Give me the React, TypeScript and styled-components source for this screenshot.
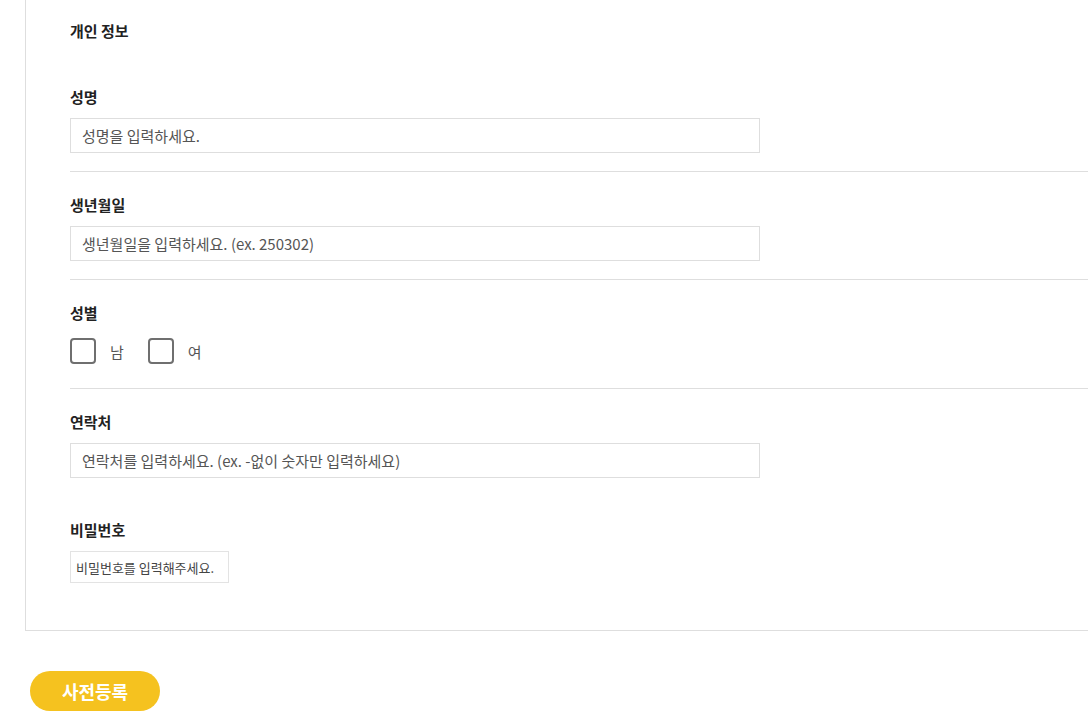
import React from 'react';
import styled, {createGlobalStyle} from "styled-components";

const GlobalStyle = createGlobalStyle`
    html, body {
        margin: 0;
        padding: 0;
        background: #fff;
        overflow: hidden;
    }
    body {
        font-family: "Noto Sans CJK KR", "Noto Sans", sans-serif;
        color: #222;
    }
`

type FieldType = {
    label: string
    placeholder: string
}

const topFields: FieldType[] = [
    {label: '성명', placeholder: '성명을 입력하세요.'},
    {label: '생년월일', placeholder: '생년월일을 입력하세요. (ex. 250302)'},
]

export default function App() {
    return (
        <>
            <GlobalStyle/>
            <Page>
                <Panel>
                    <Title>개인 정보</Title>

                    {topFields.map(f => (
                        <Section key={f.label}>
                            <Label>{f.label}</Label>
                            <TextInput placeholder={f.placeholder}/>
                        </Section>
                    ))}

                    <Section>
                        <Label>성별</Label>
                        <CheckRow>
                            <CheckItem>
                                <Box/>
                                <CheckText>남</CheckText>
                            </CheckItem>
                            <CheckItem>
                                <Box/>
                                <CheckText>여</CheckText>
                            </CheckItem>
                        </CheckRow>
                    </Section>

                    {/* 연락처 아래 구분선은 안 보임 */}
                    <Section hideLine>
                        <Label>연락처</Label>
                        <TextInput placeholder="연락처를 입력하세요. (ex. -없이 숫자만 입력하세요)"/>
                    </Section>

                    <LastSection>
                        <Label>비밀번호</Label>
                        <SmallInput type="password" placeholder="비밀번호를 입력해주세요."/>
                    </LastSection>
                </Panel>

                <SubmitButton>사전등록</SubmitButton>
            </Page>
        </>
    );
}

const Page = styled.div`
    width: 1088px;
    height: 727px;
    overflow: hidden;
`

const Panel = styled.div`
    margin-left: 25px;
    width: 1100px;
    border-left: 1px solid #dedede;
    border-bottom: 1px solid #dedede;
    padding: 20px 0 47px 44px;
    box-sizing: border-box;
`

const Title = styled.h2`
    margin: 0 0 44px;
    font-size: 15px;
    line-height: 22px;
    font-weight: 700;
    color: #222;
`

const Section = styled.div<{ hideLine?: boolean }>`
    padding-bottom: 18px;
    margin-bottom: 22px;
    border-bottom: 1px solid ${(props) => props.hideLine ? 'transparent' : '#dedede'};
`

const LastSection = styled.div``

const Label = styled.div`
    font-size: 15px;
    line-height: 22px;
    font-weight: 700;
    color: #222;
    margin-bottom: 10px;
`

const TextInput = styled.input`
    display: block;
    width: 690px;
    height: 35px;
    box-sizing: border-box;
    border: 1px solid #dedede;
    padding: 0 11px;
    font-family: "Noto Sans CJK KR", "Noto Sans", sans-serif;
    font-size: 15px;
    color: #333;
    outline: none;

    &::placeholder {
        color: #555;
    }
`

const SmallInput = styled.input`
    display: block;
    width: 159px;
    height: 32px;
    box-sizing: border-box;
    border: 1px solid #e3e3e3;
    padding: 0 5px;
    font-family: "Noto Sans CJK KR", "Noto Sans", sans-serif;
    font-size: 13px;
    outline: none;

    &::placeholder {
        color: #444;
    }
`

const CheckRow = styled.div`
    display: flex;
    gap: 24px;
    padding-top: 4px;
    padding-bottom: 6px;
`

const CheckItem = styled.label`
    display: flex;
    align-items: center;
    gap: 14px;
`

const Box = styled.span`
    width: 26px;
    height: 26px;
    box-sizing: border-box;
    border: 2px solid #6f6f6f;
    border-radius: 4px;
`

const CheckText = styled.span`
    font-size: 15px;
    color: #555;
`

const SubmitButton = styled.button`
    display: block;
    margin: 40px 0 0 30px;
    width: 130px;
    height: 40px;
    border: none;
    border-radius: 20px;
    background-color: #f5c21f;
    color: #fff;
    font-family: "Noto Sans CJK KR", "Noto Sans", sans-serif;
    font-size: 18px;
    font-weight: 700;
    cursor: pointer;
`
